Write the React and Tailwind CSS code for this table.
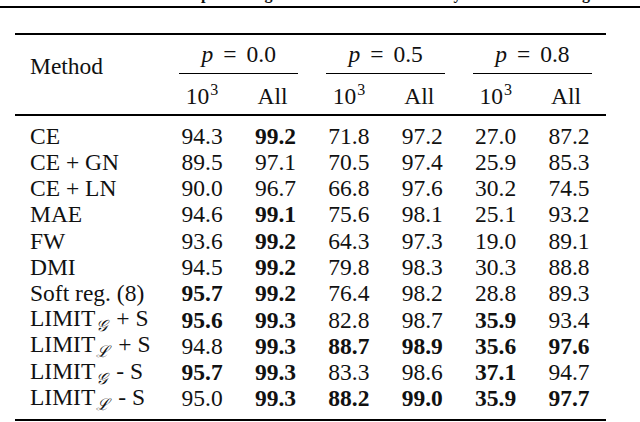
import React from 'react';

const rows = [
  ['CE', null, '94.3', '*99.2', '71.8', '97.2', '27.0', '87.2'],
  ['CE + GN', null, '89.5', '97.1', '70.5', '97.4', '25.9', '85.3'],
  ['CE + LN', null, '90.0', '96.7', '66.8', '97.6', '30.2', '74.5'],
  ['MAE', null, '94.6', '*99.1', '75.6', '98.1', '25.1', '93.2'],
  ['FW', null, '93.6', '*99.2', '64.3', '97.3', '19.0', '89.1'],
  ['DMI', null, '94.5', '*99.2', '79.8', '98.3', '30.3', '88.8'],
  ['Soft reg. (8)', null, '*95.7', '*99.2', '76.4', '98.2', '28.8', '89.3'],
  ['LIMIT', ['\u{1D4A2}', '+ S'], '*95.6', '*99.3', '82.8', '98.7', '*35.9', '93.4'],
  ['LIMIT', ['\u2112', '+ S'], '94.8', '*99.3', '*88.7', '*98.9', '*35.6', '*97.6'],
  ['LIMIT', ['\u{1D4A2}', '- S'], '*95.7', '*99.3', '83.3', '98.6', '*37.1', '94.7'],
  ['LIMIT', ['\u2112', '- S'], '95.0', '*99.3', '*88.2', '*99.0', '*35.9', '*97.7'],
];

const groups = ['0.0', '0.5', '0.8'];

const Cell = ({ value }) => {
  const bold = value.startsWith('*');
  return (
    <div className={`w-[73.4px] flex items-center justify-center ${bold ? 'font-bold' : ''}`}>
      {bold ? value.slice(1) : value}
    </div>
  );
};

const MethodName = ({ name, sub }) => {
  if (!sub) return <span>{name}</span>;
  return (
    <span className="whitespace-nowrap">
      {name}
      <span className="text-[16px] italic relative top-[5px] ml-[1px]">{sub[0]}</span>
      <span className="ml-[9px]">{sub[1]}</span>
    </span>
  );
};

export default function App() {
  return (
    <div className="w-[640px] h-[422px] bg-white overflow-hidden text-[#111] font-['Liberation_Serif']">
      {/* caption, cut off by the top edge: only descenders show */}
      <div className="h-[4px] overflow-hidden flex items-end text-[16px] leading-[16px] font-bold whitespace-nowrap">
        <span className="ml-[168px] mb-[2px]">Comparison against</span>
        <span className="ml-[14px] mb-[2px]">methods obtained by the whole training</span>
      </div>
      <div className="h-[2px] mt-[2px] bg-black" />

      <div className="ml-[15px] w-[591px] mt-[25px] text-[23.5px]">
        <div className="h-[2px] bg-black" />

        {/* header */}
        <div className="h-[79px] flex">
          <div className="w-[150.4px] flex items-center pl-[15px] pb-[15px]">Method</div>
          {groups.map((g) => (
            <div key={g} className="w-[146.8px] flex flex-col">
              <div className="h-[26px] mt-[7px] flex items-center justify-center">
                <span className="italic">p</span>
                <span className="mx-[10px]">=</span>
                <span>{g}</span>
              </div>
              <div className="h-[1px] mt-[5px] mx-[14px] bg-black" />
              <div className="h-[26px] mt-[10px] flex">
                <div className="w-[73.4px] flex items-center justify-center">
                  <span>
                    10<span className="text-[16px] relative -top-[9px] ml-[1px]">3</span>
                  </span>
                </div>
                <div className="w-[73.4px] flex items-center justify-center pr-[6px]">All</div>
              </div>
            </div>
          ))}
        </div>
        <div className="h-[1.5px] bg-black" />

        {/* body */}
        <div className="pt-[7px] pb-[7px]">
          {rows.map((r, i) => (
            <div key={i} className="h-[26.3px] leading-[26.3px] flex">
              <div className="w-[150.4px] pl-[15px] flex items-center">
                <MethodName name={r[0]} sub={r[1]} />
              </div>
              {r.slice(2).map((v, j) => (
                <Cell key={j} value={v} />
              ))}
            </div>
          ))}
        </div>
        <div className="h-[2px] bg-black" />
      </div>
    </div>
  );
}
